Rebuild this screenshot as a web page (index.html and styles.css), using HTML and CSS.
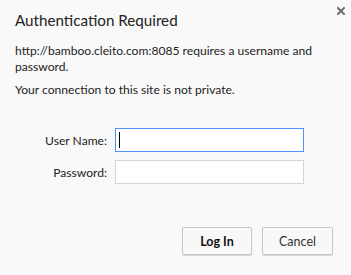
FILE: index.html
```html
<!DOCTYPE html>
<html>
<head>
	<title>Authentication Required</title>
	<meta charset="utf-8">
	<link rel="stylesheet" href="styles.css">
</head>
<body>
<div class="dialog">

	<div class="header">
		<h1>Authentication Required</h1>
		<span class="close" title="Close">
			<svg width="8" height="8" viewBox="0 0 8 8"><path d="M1 1L7 7M7 1L1 7" stroke="#6f6f6f" stroke-width="2" stroke-linecap="square"/></svg>
		</span>
	</div>

	<div class="message">
		<p>http://bamboo.cleito.com:8085 requires a username and password.</p>
		<p>Your connection to this site is not private.</p>
	</div>

	<form class="login">
		<label for="username">User Name:</label>
		<div class="field focused"><span class="caret"></span></div>
		<label for="password">Password:</label>
		<div class="field"></div>
	</form>

	<div class="buttons">
		<button class="primary">Log In</button>
		<button>Cancel</button>
	</div>

</div>
</body>
</html>
```

FILE: styles.css
```css
/* Reset */

* { margin: 0; padding: 0; box-sizing: border-box; }

html, body {
	height: 100%;
}

body {
	background-color: #f9f9f9;
	font-family: Lato, "Open Sans", sans-serif;
	font-size: 12.1px;
	color: #222;
}


/* Dialog */

.dialog {
	padding: 0 18px 0 15px;
}


/* Header */

.header {
	display: flex;
	justify-content: space-between;
	align-items: flex-start;
	padding-top: 9px;
}

.header h1 {
	font-weight: normal;
	font-size: 15.2px;
	line-height: 22px;
	color: #222;
}

.close {
	margin-top: -2px;
	margin-right: -12px;
	line-height: 0;
}


/* Message */

.message {
	margin-top: 12px;
	line-height: 16px;
}

.message p {
	margin-bottom: 7px;
}


/* Form */

.login {
	display: grid;
	grid-template-columns: 92px 189px;
	column-gap: 8px;
	row-gap: 8px;
	align-items: center;
	margin-top: 30px;
}

.login label {
	text-align: right;
}

.field {
	height: 24px;
	background-color: white;
	border: solid 1px #d5d5d5;
	padding: 3px 3px;
}

.field.focused {
	border-color: #4d90fe;
}

.caret {
	display: block;
	width: 1px;
	height: 16px;
	background-color: black;
}


/* Buttons */

.buttons {
	display: flex;
	justify-content: flex-end;
	gap: 10px;
	margin-top: 43px;
}

.buttons button {
	width: 71px;
	height: 28px;
	font-family: inherit;
	font-size: 12.5px;
	color: #333;
	background-color: #f8f8f8;
	border: solid 1px #c6c6c6;
	border-radius: 2px;
	box-shadow: 0 1px 1px rgba(0, 0, 0, 0.15);
}

.buttons .primary {
	width: 70px;
	font-weight: bold;
	color: #111;
}
```
